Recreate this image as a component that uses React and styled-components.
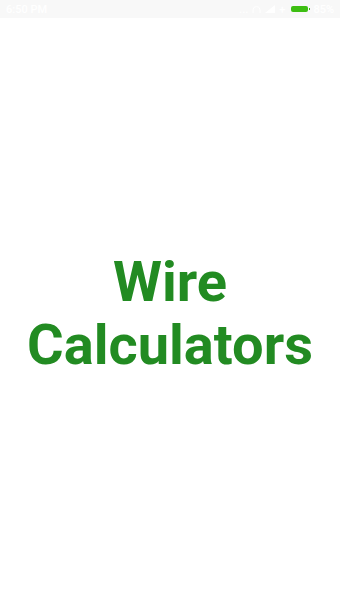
import React from 'react';
import styled, { createGlobalStyle } from 'styled-components';

const GlobalStyle = createGlobalStyle`
  html, body {
    margin: 0;
    padding: 0;
    background: #FFFFFF;
  }
  body {
    font-family: Roboto, "Liberation Sans", sans-serif;
  }
`;

const Screen = styled.div`
  width: 340px;
  height: 605px;
  display: flex;
  flex-direction: column;
  background-color: #FFFFFF;
  overflow: hidden;
`;

const StatusBar = styled.div`
  height: 18px;
  flex-shrink: 0;
  background-color: #F8F8F8;
  display: flex;
  align-items: center;
  justify-content: space-between;
  padding: 0 6px 0 6px;
  color: #FFFFFF;
  font-size: 11px;
  font-weight: 500;
`;

const StatusIcons = styled.div`
  display: flex;
  align-items: center;
  gap: 4px;
`;

const Battery = styled.div`
  position: relative;
  width: 17px;
  height: 6px;
  border-radius: 2px;
  background-color: #3DBE12;
  margin-left: 2px;
  margin-right: 1px;

  &::after {
    content: '';
    position: absolute;
    right: -2px;
    top: 2px;
    width: 1px;
    height: 2px;
    background-color: #3DBE12;
  }
`;

const Content = styled.div`
  flex: 1;
  display: flex;
  align-items: center;
  justify-content: center;
  padding-top: 4px;
`;

const Title = styled.h1`
  margin: 0;
  text-align: center;
  color: #228B22;
  font-family: Roboto, "Liberation Sans", sans-serif;
  font-weight: 700;
  font-size: 56px;
  line-height: 63px;
`;

const App = () => {
  return (
    <Screen>
      <GlobalStyle />
      <StatusBar>
        <span>6:50 PM</span>
        <StatusIcons>
          <span>...</span>
          <svg width="9" height="9" viewBox="0 0 9 9" fill="none" stroke="#FFFFFF" strokeWidth="1">
            <path d="M1 8V5a3.5 3.5 0 0 1 7 0v3" />
          </svg>
          <svg width="10" height="8" viewBox="0 0 10 8" fill="#FFFFFF">
            <path d="M0 8h10V0z" />
          </svg>
          <span>+</span>
          <Battery />
          <span>85%</span>
        </StatusIcons>
      </StatusBar>
      <Content>
        <Title>
          Wire
          <br />
          Calculators
        </Title>
      </Content>
    </Screen>
  );
};

export default App;
